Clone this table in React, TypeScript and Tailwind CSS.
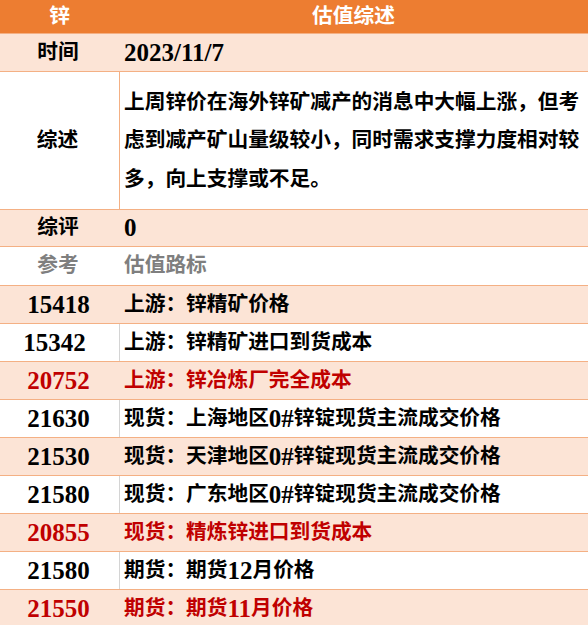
import React from 'react'

type Row = {
  num: string
  text: string
  tone: 'peach' | 'white'
  red?: boolean
  numClass?: string
}

const ROWS: Row[] = [
  { num: '15418', text: '上游：锌精矿价格', tone: 'peach' },
  { num: '15342', text: '上游：锌精矿进口到货成本', tone: 'white', numClass: 'pr-[10px]' },
  { num: '20752', text: '上游：锌冶炼厂完全成本', tone: 'peach', red: true },
  { num: '21630', text: '现货：上海地区0#锌锭现货主流成交价格', tone: 'white' },
  { num: '21530', text: '现货：天津地区0#锌锭现货主流成交价格', tone: 'peach' },
  { num: '21580', text: '现货：广东地区0#锌锭现货主流成交价格', tone: 'white' },
  { num: '20855', text: '现货：精炼锌进口到货成本', tone: 'peach', red: true },
  { num: '21580', text: '期货：期货12月价格', tone: 'white' },
  { num: '21550', text: '期货：期货11月价格', tone: 'peach', red: true },
]

// latin runs are set larger, like the serif digits in the sheet
function Mixed({ text }: { text: string }) {
  const parts = text.split(/([0-9#/]+)/)
  return (
    <>
      {parts.map((p, i) =>
        /^[0-9#/]+$/.test(p) ? (
          <span key={i} className="text-[25px]">{p}</span>
        ) : (
          <span key={i}>{p}</span>
        ),
      )}
    </>
  )
}

export default function App() {
  return (
    <div
      className="w-[588px] h-[625px] overflow-hidden bg-white font-bold text-[20.7px] text-black"
      style={{ fontFamily: '"Liberation Serif", "Noto Sans CJK SC", serif' }}
    >
      {/* Header */}
      <div className="flex h-[34px] bg-[#ED7D31] text-white border-b border-[#F4B084]">
        <div className="w-[119px] flex items-center justify-center">锌</div>
        <div className="flex-1 flex items-center justify-center">估值综述</div>
      </div>

      <div className="flex h-[38px] bg-[#FCE4D6] border-b border-[#F4B084]">
        <div className="w-[120px] flex items-center justify-center pr-[4px]">时间</div>
        <div className="flex-1 flex items-center pl-[4px]">
          <Mixed text="2023/11/7" />
        </div>
      </div>

      <div className="flex h-[138px] bg-white border-b border-[#F4B084]">
        <div className="w-[120px] flex items-center justify-center pr-[4px] border-r border-[#F4B084]">综述</div>
        <div className="flex-1 flex items-center pl-[4px] pr-[2px] leading-[38.5px]">
          <p>上周锌价在海外锌矿减产的消息中大幅上涨，但考虑到减产矿山量级较小，同时需求支撑力度相对较多，向上支撑或不足。</p>
        </div>
      </div>

      <div className="flex h-[37px] bg-[#FCE4D6] border-b border-[#F4B084]">
        <div className="w-[120px] flex items-center justify-center pr-[4px]">综评</div>
        <div className="flex-1 flex items-center pl-[4px]">
          <Mixed text="0" />
        </div>
      </div>

      <div className="flex h-[39px] bg-white text-[#7F7F7F] border-b border-[#F4B084]">
        <div className="w-[120px] flex items-center justify-center pr-[4px]">参考</div>
        <div className="flex-1 flex items-center pl-[4px]">估值路标</div>
      </div>

      {ROWS.map((r, i) => (
        <div
          key={i}
          className={`flex h-[38px] shrink-0 border-b border-[#F4B084] ${
            r.tone === 'peach' ? 'bg-[#FCE4D6]' : 'bg-white'
          } ${r.red ? 'text-[#C00000]' : 'text-black'}`}
        >
          <div
            className={`w-[120px] flex items-center justify-center text-[25px] pr-[2px] border-r ${
              r.tone === 'peach' ? 'border-[#FCE4D6]' : 'border-[#D4D4D4]'
            } ${r.numClass ?? ''}`}
          >
            {r.num}
          </div>
          <div className="flex-1 flex items-center pl-[4px] whitespace-nowrap">
            <Mixed text={r.text} />
          </div>
        </div>
      ))}
    </div>
  )
}
